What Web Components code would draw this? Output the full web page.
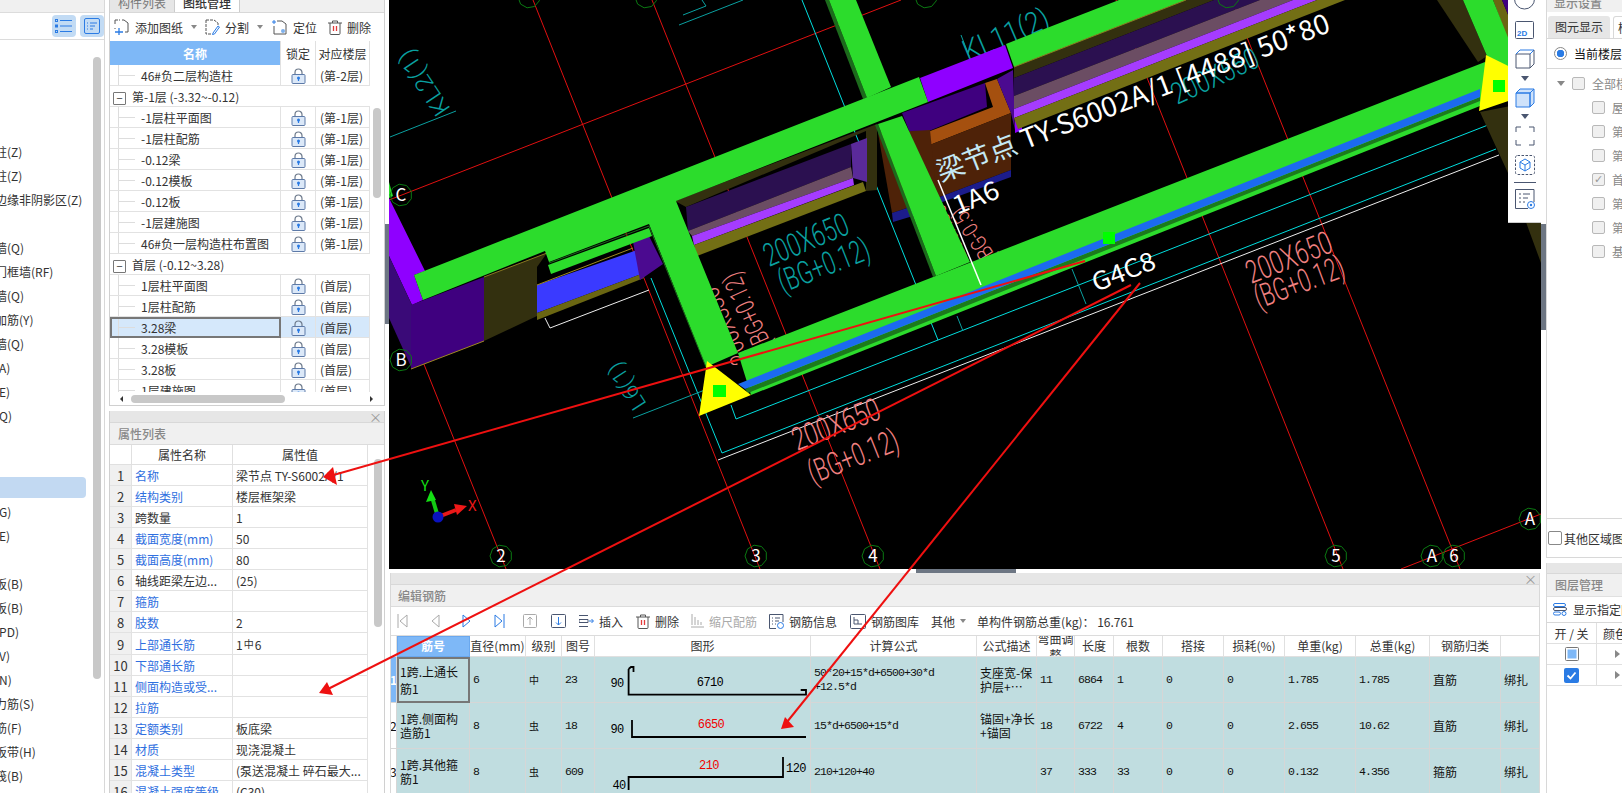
<!DOCTYPE html>
<html lang="zh">
<head>
<meta charset="utf-8">
<title>编辑钢筋</title>
<style>
  html, body { margin: 0; height: 793px; overflow: hidden; background: #fff; }
  body { font: 12px "Noto Sans CJK SC", "Liberation Sans", sans-serif; color: #333; }
</style>
</head>
<body>
<app-shell>
  <nav-panel slot="nav"></nav-panel>
  <drawing-panel slot="drawing"></drawing-panel>
  <prop-panel slot="props"></prop-panel>
  <cad-view slot="cad"><view-toolbar></view-toolbar></cad-view>
  <rebar-panel slot="rebar"></rebar-panel>
  <display-panel slot="display"></display-panel>
  <layer-panel slot="layers"></layer-panel>
  <red-arrows slot="arrows"></red-arrows>
</app-shell>

<script>
const FONT = '"Noto Sans CJK SC", "Liberation Sans", sans-serif';
const MONO = '"Liberation Mono", "Noto Sans CJK SC", monospace';

// small icon set shared by the toolbars
const icons = {
  lock: `<svg width="15" height="16" viewBox="0 0 15 16"><path d="M4 7V4.5a3.5 3.5 0 0 1 7 0V7" fill="none" stroke="#6d7a8c" stroke-width="1.2"/><rect x="1" y="6.5" width="13" height="9" rx="1" fill="#dbe8f8" stroke="#5d7aa8"/><circle cx="7.5" cy="10" r="1.5" fill="#2a7be4"/><path d="M7.5 10v3" stroke="#2a7be4" stroke-width="1.2"/></svg>`,
  add: `<svg width="16" height="16" viewBox="0 0 16 16" fill="none"><path d="M4 1H1v4M8 1h2l4 3v9h-3M1 9v1" stroke="#555"/><path d="M5 1h1" stroke="#555"/><path d="M1 13h8M5 9v7" stroke="#2a7be4" stroke-width="1.3"/></svg>`,
  split: `<svg width="16" height="16" viewBox="0 0 16 16" fill="none"><path d="M2 1h8l4 3v2M2 1v14h5" stroke="#555" stroke-dasharray="3 1"/><path d="M9 14l5-7 1.5 1-5 7-2 .5z" stroke="#2a7be4"/></svg>`,
  locate: `<svg width="16" height="16" viewBox="0 0 16 16" fill="none"><path d="M5 2h5l4 3v10H2V7" stroke="#555"/><path d="M2 1v4M0 3h4" stroke="#2a7be4"/><circle cx="11" cy="12" r="2" fill="#7eb0ec"/></svg>`,
  trash: `<svg width="14" height="15" viewBox="0 0 14 15" fill="none"><path d="M2 3v10.5a1 1 0 0 0 1 1h8a1 1 0 0 0 1-1V3M0 3h14M4.5 3V1h5v2" stroke="#555"/><path d="M5.5 6v5M8.5 6v5" stroke="#e23b3b" stroke-width="1.3"/></svg>`,
  list: `<svg width="18" height="14" viewBox="0 0 18 14" fill="none" stroke="#2a7be4"><rect x=".5" y=".5" width="2" height="2"/><rect x=".5" y="6" width="2" height="2"/><rect x=".5" y="11.500" width="2" height="2"/><path d="M5 1.500h12M5 7h12M5 12.500h12" stroke-width="1.200"/></svg>`,
  form: `<svg width="16" height="16" viewBox="0 0 16 16" fill="none" stroke="#2a7be4"><rect x=".5" y=".5" width="15" height="15" rx="1.500"/><path d="M3 5h1M6 5h7M3 8h1M6 8h5M3 11h1M6 11h3"/></svg>`,
  caret: `<svg width="6" height="4" viewBox="0 0 6 4"><path d="M0 0h6L3 4z" fill="#888"/></svg>`
};

class AppShell extends HTMLElement {
  constructor() {
    super();
    this.attachShadow({ mode: 'open' });
    this.shadowRoot.innerHTML = `
      <style>
        :host { display: block; position: relative; width: 1622px; height: 793px; overflow: hidden; }
        .cols { display: flex; height: 793px; }
        .nav { width: 105px; flex: none; }
        .mid { width: 276px; margin-left: 4px; flex: none; display: flex; flex-direction: column; gap: 5px; }
        .v-split { width: 4px; flex: none; display: flex; align-items: flex-start; background: #fff; }
        .v-split i { display: block; width: 4px; height: 100px; margin-top: 224px; background: #6d7683; }
        .center { width: 1152px; flex: none; display: flex; flex-direction: column; }
        .h-split { height: 4px; flex: none; padding-left: 527px; }
        .h-split i { display: block; width: 100px; height: 4px; background: #6d7683; }
        .right { width: 76px; flex: none; display: flex; flex-direction: column; gap: 5px; }
      </style>
      <div class="cols">
        <div class="nav"><slot name="nav"></slot></div>
        <div class="mid"><slot name="drawing"></slot><slot name="props"></slot></div>
        <div class="v-split"><i></i></div>
        <div class="center">
          <slot name="cad"></slot>
          <div class="h-split"><i></i></div>
          <slot name="rebar"></slot>
        </div>
        <div class="v-split" style="width:5px"><i style="width:5px;height:106px"></i></div>
        <div class="right"><slot name="display"></slot><slot name="layers"></slot></div>
      </div>
      <slot name="arrows"></slot>`;
  }
}

class NavPanel extends HTMLElement {
  constructor() {
    super();
    this.attachShadow({ mode: 'open' });
    const items = ['', '', '', '', '柱(Z)', '柱(Z)', '边缘非阴影区(Z)', '', '墙(Q)', '门框墙(RF)', '墙(Q)', '加筋(Y)', '墙(Q)', '(A)', '(E)', '(Q)', '', '', '*', '(G)', '(E)', '', '板(B)', '板(B)', '(PD)', '(V)', '(N)', '力筋(S)', '筋(F)', '板带(H)', '筏(B)'];
    const rows = items.map(t => t === '*' ? '<div class="row sel"></div>' : `<div class="row"><span>${t}</span></div>`).join('');
    this.shadowRoot.innerHTML = `
      <style>
        :host { display: block; height: 793px; border-right: 1px solid #d8d8d8; box-sizing: border-box; overflow: hidden; }
        .strip { height: 12px; background: #f0f0f0; border-bottom: 1px solid #dcdcdc; }
        .tools { height: 26px; border-bottom: 1px solid #dcdcdc; display: flex; justify-content: flex-end; align-items: center; gap: 4px; padding-right: 0; }
        .tools b { width: 24px; height: 22px; background: #c2dbf4; border-radius: 4px; display: flex; align-items: center; justify-content: center; }
        .body { display: flex; height: 740px; padding-top: 4px; }
        .list { width: 86px; flex: none; overflow: hidden; }
        .row { height: 24px; line-height: 24px; white-space: nowrap; font-size: 12px; }
        .row span { display: block; margin-left: -5px; }
        .row.sel { height: 21px; margin: 1px 0 2px; background: #c2d9f2; border-radius: 0 4px 4px 0; }
        .bar { width: 8px; margin: 13px 0 0 7px; height: 622px; border-radius: 4px; background: #c8c8c8; }
      </style>
      <div class="strip"></div>
      <div class="tools"><b>${icons.list}</b><b>${icons.form}</b></div>
      <div class="body"><div class="list">${rows}</div><div class="bar"></div></div>`;
  }
}

class DrawingPanel extends HTMLElement {
  constructor() {
    super();
    this.attachShadow({ mode: 'open' });
    const groups = [
      ['leaf', '46#负二层构造柱', '(第-2层)'],
      ['group', '第-1层 (-3.32~-0.12)'],
      ['leaf', '-1层柱平面图', '(第-1层)'], ['leaf', '-1层柱配筋', '(第-1层)'], ['leaf', '-0.12梁', '(第-1层)'],
      ['leaf', '-0.12模板', '(第-1层)'], ['leaf', '-0.12板', '(第-1层)'], ['leaf', '-1层建施图', '(第-1层)'],
      ['leaf', '46#负一层构造柱布置图', '(第-1层)'],
      ['group', '首层 (-0.12~3.28)'],
      ['leaf', '1层柱平面图', '(首层)'], ['leaf', '1层柱配筋', '(首层)'], ['sel', '3.28梁', '(首层)'],
      ['leaf', '3.28模板', '(首层)'], ['leaf', '3.28板', '(首层)'], ['leaf', '1层建施图', '(首层)']
    ];
    const rows = groups.map(([kind, name, floor]) => kind === 'group'
      ? `<tr><td colspan="3" class="grp"><i>−</i>${name}</td></tr>`
      : `<tr class="${kind}"><td class="nm">${name}</td><td class="lk">${icons.lock}</td><td>${floor}</td></tr>`).join('');
    this.shadowRoot.innerHTML = `
      <style>
        :host { display: block; height: 406px; border: solid #d0d0d0; border-width: 0 1px 1px; box-sizing: border-box; overflow: hidden; flex: none; }
        .tabs { height: 12px; display: flex; background: #f0f0f0; border-bottom: 1px solid #d8d8d8; }
        .tabs span { width: 64px; height: 12px; overflow: hidden; text-align: center; color: #777; background: #e6e6e6; border-right: 1px solid #ccc; }
        .tabs span.on { background: #fff; color: #333; font-weight: 500; }
        .tabs u { display: block; text-decoration: none; margin-top: -9px; line-height: 24px; }
        .tools { height: 28px; display: flex; align-items: center; font-size: 12px; padding-left: 4px; }
        .tools svg { flex: none; }
        .tools span { margin-left: 5px; }
        .main { display: flex; height: 351px; }
        .wrap { width: 260px; height: 351px; overflow: hidden; flex: none; }
        table { width: 260px; table-layout: fixed; border-collapse: separate; border-spacing: 0; }
        th { height: 24px; padding: 0; font-weight: 400; border-right: 1px solid #e0e0e0; box-sizing: border-box; white-space: nowrap; overflow: hidden; }
        th.blue { background: #7eb8f7; color: #fff; font-weight: 700; }
        td { height: 21px; padding: 1px 0 0 4px; box-sizing: border-box; border-bottom: 1px solid #e2e2e2; border-right: 1px solid #e2e2e2; line-height: 19px; white-space: nowrap; overflow: hidden; }
        td.nm { padding-left: 31px; background: linear-gradient(#ddd,#ddd) 8px 0/1px 100% no-repeat, linear-gradient(#ddd,#ddd) 8px 10px/17px 1px no-repeat; }
        td.lk { padding: 2px 0 0; text-align: center; line-height: 0; }
        td.grp { padding-left: 3px; border-right: 0; }
        td.grp i { display: inline-block; width: 11px; height: 11px; border: 1px solid #777; border-radius: 1px; margin-right: 6px; font-style: normal; text-align: center; line-height: 10px; vertical-align: -1px; font-size: 11px; }
        tr.sel td { background-color: #d5e8fb; }
        tr.sel td.nm { outline: 2px solid #777; outline-offset: -2px; }
        .thumb { width: 8px; height: 90px; margin: 67px 0 0 3px; border-radius: 4px; background: #c8c8c8; }
        .hbar { height: 13px; display: flex; align-items: center; padding-left: 7px; }
        .hbar b { display: block; width: 0; height: 0; border: 3px solid transparent; border-right-color: #333; }
        .hbar em { display: block; width: 154px; height: 8px; margin: 0 0 0 8px; border-radius: 4px; background: #c8c8c8; }
        .hbar b.r { margin-left: 85px; border-right-color: transparent; border-left-color: #333; }
      </style>
      <div class="tabs"><span><u>构件列表</u></span><span class="on"><u>图纸管理</u></span></div>
      <div class="tools">
        ${icons.add}<span>添加图纸</span><span style="margin-left:8px;display:flex">${icons.caret}</span>
        <span style="margin-left:7px;display:flex">${icons.split}</span><span>分割</span><span style="margin-left:8px;display:flex">${icons.caret}</span>
        <span style="margin-left:9px;display:flex">${icons.locate}</span><span>定位</span>
        <span style="margin-left:11px;display:flex">${icons.trash}</span><span>删除</span>
      </div>
      <div class="main">
        <div class="wrap">
          <table>
            <colgroup><col style="width:171px"><col style="width:35px"><col style="width:54px"></colgroup>
            <tr><th class="blue">名称</th><th>锁定</th><th>对应楼层</th></tr>
            ${rows}
          </table>
        </div>
        <div class="thumb"></div>
      </div>
      <div class="hbar"><b></b><em></em><b class="r"></b></div>`;
  }
}

class PropPanel extends HTMLElement {
  constructor() {
    super();
    this.attachShadow({ mode: 'open' });
    const props = [
      ['名称', '梁节点 TY-S6002A/1', 1], ['结构类别', '楼层框架梁', 1], ['跨数量', '1', 0], ['截面宽度(mm)', '50', 1],
      ['截面高度(mm)', '80', 1], ['轴线距梁左边...', '(25)', 0], ['箍筋', '', 1], ['肢数', '2', 1], ['上部通长筋', '1<small>中</small>6', 1],
      ['下部通长筋', '', 1], ['侧面构造或受...', '', 1], ['拉筋', '', 1], ['定额类别', '板底梁', 1], ['材质', '现浇混凝土', 1],
      ['混凝土类型', '(泵送混凝土 碎石最大...', 1], ['混凝土强度等级', '(C30)', 1]
    ];
    const rows = props.map(([n, v, blue], i) => `<tr><td class="n">${i + 1}</td><td class="${blue ? 'blue' : ''}">${n}</td><td>${v}</td></tr>`).join('');
    this.shadowRoot.innerHTML = `
      <style>
        :host { display: block; flex: 1; min-height: 0; border: solid #d0d0d0; border-width: 0 1px; overflow: hidden; }
        .strip { height: 11px; background: #e6e6e6; border-bottom: 1px solid #d8d8d8; display: flex; justify-content: flex-end; color: #999; font-size: 13px; line-height: 11px; padding-right: 2px; }
        .title { height: 22px; background: #f0f0f0; border-bottom: 1px solid #dcdcdc; color: #888; font-weight: 500; line-height: 21px; padding-left: 8px; box-sizing: border-box; }
        .main { display: flex; }
        table { width: 258px; flex: none; table-layout: fixed; border-collapse: separate; border-spacing: 0; }
        th { height: 20px; padding: 0; font-weight: 400; border: solid #e0e0e0; border-width: 0 1px 1px 0; box-sizing: border-box; line-height: 19px; }
        td { height: 21px; padding: 1px 0 0 3px; box-sizing: border-box; border: solid #e2e2e2; border-width: 0 1px 1px 0; line-height: 19px; white-space: nowrap; overflow: hidden; }
        td.n { background: #f0f0f0; padding: 1px 0 0; text-align: center; font-size: 13px; }
        td.blue { color: #2f6fe0; }
        small { font-size: 10px; vertical-align: 2px; margin: 0 1px; }
        .thumb { width: 8px; height: 168px; margin: 14px 0 0 6px; border-radius: 4px; background: #c8c8c8; }
      </style>
      <div class="strip">×</div>
      <div class="title">属性列表</div>
      <div class="main">
        <table>
          <colgroup><col style="width:22px"><col style="width:101px"><col style="width:135px"></colgroup>
          <tr><th></th><th>属性名称</th><th>属性值</th></tr>
          ${rows}
        </table>
        <div class="thumb"></div>
      </div>`;
  }
}

class CadView extends HTMLElement {
  constructor() {
    super();
    this.attachShadow({ mode: 'open' });
    const poly = (c, p) => `<polygon fill="${c}" points="${p}"/>`;
    const line = (c, w, ...p) => `<polyline fill="none" stroke="${c}" stroke-width="${w}" points="${p.join(' ')}"/>`;
    // text placed along a baseline given by its two end points
    const along = (t, x1, y1, x2, y2, size, fill, cls = 'thin') => {
      const a = Math.atan2(y2 - y1, x2 - x1) * 180 / Math.PI;
      const len = Math.hypot(x2 - x1, y2 - y1);
      return `<text class="${cls}" transform="translate(${x1} ${y1}) rotate(${a.toFixed(1)})" textLength="${len.toFixed(0)}" lengthAdjust="spacingAndGlyphs" font-size="${size}" fill="${fill}">${t}</text>`;
    };
    const axis = (t, x, y) => {
      const pts = [];
      for (let i = 0; i < 9; i++) pts.push((x + 11 * Math.cos(i * 0.698 + 0.35)).toFixed(1) + ',' + (y + 11 * Math.sin(i * 0.698 + 0.35)).toFixed(1));
      return `<polygon points="${pts.join(' ')}" fill="none" stroke="#0b7a12"/>` + (t ? `<text x="${x}" y="${y + 6}" text-anchor="middle" font-size="17" fill="#fff">${t}</text>` : '');
    };
    const RED = '#e01010', CY = '#00dede', TEAL = '#0aa0a0', PINK = '#f08080', GR = '#2cdc2c', OL = '#33300f';

    const grid = [
      line(RED, 1, '278,0', '506,569'), line(RED, 1, '533,0', '760,569'), line(RED, 1, '652,0', '880,569'),
      line(RED, 1, '1116,0', '1343,569'), line(RED, 1, '1232,0', '1460,569'),
      line(RED, 1, '389,200', '901,0'), line(RED, 1, '1401,569', '1541,514')
    ].join('');
    const wires = [
      line(CY, 1, '802,0', '938,340'), line(CY, 1, '731,405', '736,419', '1488,125'), line(CY, 1, '651,278', '722,453', '1496,149'),
      line('#eee', 1, '718,460', '1499,155'), line('#eee', 1, '649,290', '550,328', '545,318'),
      line(TEAL, 1, '390,137', '456,111'), line(TEAL, 1, '633,418', '710,388'), line(TEAL, 1, '1072,269', '1086,304'),
      line(TEAL, 1, '957,316', '963,331'), line(TEAL, 1, '679,25', '743,0'), line(TEAL, 1, '683,15', '706,6', '702,0'), line(TEAL, 1, '961,35', '969,56')
    ].join('');
    const labels = [
      along('KL2(1)', 451, 109, 410, 47, 24, TEAL),
      along('L6(1)', 647, 404, 619, 360, 22, TEAL),
      along('KL11(2)', 968, 62, 1052, 26, 30, TEAL),
      along('200X550', 1177, 105, 1261, 66, 30, TEAL),
      along('200X650', 769, 267, 851, 233, 32, TEAL),
      along('(BG+0.12)', 783, 293, 872, 258, 32, TEAL),
      along('200X650', 797, 451, 883, 418, 32, PINK),
      along('(BG+0.12)', 813, 484, 901, 449, 32, PINK),
      along('200X650', 1251, 284, 1335, 251, 32, PINK),
      along('(BG+0.12)', 1259, 309, 1347, 276, 32, PINK),
      along('200X330', 750, 360, 716, 285, 26, PINK),
      along('(BG+0.12)', 772, 345, 738, 270, 26, PINK),
      along('200X550', 967, 257, 940, 195, 22, PINK),
      along('(BG-0.5)', 997, 258, 963, 205, 22, PINK)
    ].join('');
    const solids = [
      // purple column on the left and wall faces
      poly('#8f00ff', '389,198 425,271 414,275 423,300 412,305 389,256'),
      poly('#3a0a78', '389,256 412,305 412,369 389,318'),
      poly('#3f007f', '411,305 484,277 484,341 411,369'),
      poly(OL, '484,277 547,253 537,267 537,316 484,341'),
      poly('#3a3aff', '537,285 640,249 644,273 537,313'),
      poly('#6a6612', '537,313 644,273 644,278 537,320'),
      poly('#4b0a90', '633,242 649,236 663,264 640,280'),
      line('#a08a20', 1, '411,369', '484,341'),
      line('#8a7a20', 1, '484,277', '547,253'),
      line('#a08a20', 1, '537,285', '633,248'),
      // left window between the beams
      poly(OL, '675,201 877,124 877,190 866,191 866,131 686,207'),
      poly('#2b1050', '686,207 851,144 851,167 688,231'),
      poly('#6b4d63', '688,231 851,167 853,178 692,236'),
      poly('#a53cff', '692,236 853,178 854,185 694,245'),
      poly('#5a2a9a', '851,144 867,138 867,182 853,178'),
      poly('#736f15', '694,245 863,182 866,191 697,256'),
      // brown block and purple frame in the middle
      poly('#8f00ff', '920,78 1005,45 1013,68 928,102'),
      poly('#3f007f', '902,113 985,83 987,107 912,138'),
      poly('#a5500f', '912,138 993,107 985,83 997,79 1011,113 917,150'),
      poly('#4e2208', '917,150 1011,113 1011,170 937,198'),
      poly('#1c1c8c', '937,198 1011,170 1011,177 937,204'),
      poly('#4e2208', '878,133 930,130 937,198 907,208 892,213'),
      poly('#1c1c8c', '892,213 910,207 913,216 893,222'),
      poly('#4b0a90', '997,79 1013,70 1015,130 1011,113'),
      poly('#8f00ff', '1015,120 1022,118 1022,130 1015,133'),
      // window on the right, running off the top
      poly(OL, '1014,67 1186,0 1214,0 1014,78'),
      poly('#2b1050', '1014,78 1214,0 1260,0 1014,96'),
      poly('#6b4d63', '1014,96 1260,0 1293,0 1014,109'),
      poly('#a53cff', '1014,109 1293,0 1317,0 1014,118'),
      poly('#736f15', '1014,118 1317,0 1345,0 1018,129'),
      // far right
      poly(OL, '1437,0 1463,0 1487,56 1478,62'),
      poly(OL, '1480,112 1541,100 1541,263 1508,173'),
      poly('#6a6612', '1493,0 1502,0 1541,95 1541,130 1508,40'),
      poly('#3f007f', '1502,0 1541,0 1541,95'),
      poly(GR, '1463,0 1493,0 1541,120 1541,150 1508,75 1487,56'),
      // green beams
      poly('#1c6a1c', '825,0 829,0 867,98 863,99'),
      poly(GR, '829,0 856,0 891,87 867,98'),
      poly(GR, '414,275 919,77 928,102 676,201 738,353 706,367 649,224 549,262 545,251 423,300'),
      poly(GR, '548,265 649,228 652,236 551,274'),
      poly(GR, '1006,44 1119,0 1186,0 1014,67'),
      line('#8a7a20', 1, '1014,67', '1186,0'),
      line('#1c6a1c', 1, '549,263', '649,226', '706,367'),
      poly('#1c6a1c', '875,125 878,124 936,276 933,277'),
      poly(GR, '878,124 902,116 970,262 936,276'),
      poly(GR, '738,353 1485,62 1485,104 751,395'),
      poly('#1c7a1c', '745,389 1480,97 1480,101 748,393'),
      poly('#1c6af0', '738,384 1480,89 1480,97 745,389'),
      line('#fff', 1.5, '938,180', '981,285'),
      // yellow markers
      poly('#ffff00', '707,361 699,416 751,395'),
      poly('#00ff00', '713,385 726,385 726,397 713,397'),
      poly('#ffff00', '1486,55 1479,111 1541,90 1541,82'),
      poly('#00ff00', '1493,80 1505,80 1505,92 1493,92'),
      poly('#00ff00', '1103,232 1115,232 1115,244 1103,244'),
      poly(GR, '389,182 393,196 389,198')
    ].join('');
    const circles = [
      axis('2', 501, 556), axis('3', 756, 556), axis('4', 873, 556), axis('5', 1336, 556),
      axis('A', 1432, 556), axis('6', 1454, 556), axis('A', 1530, 519), axis('C', 401, 195), axis('B', 401, 360),
      axis('', 529, -3), axis('', 646, -3), axis('', 926, -3), axis('', 1228, -3)
    ].join('');

    this.shadowRoot.innerHTML = `
      <style>
        :host { display: block; position: relative; height: 569px; width: 1152px; flex: none; background: #000; overflow: hidden; }
        svg { display: block; }
        text { font-family: "Noto Sans CJK SC", "Liberation Sans", sans-serif; }
        text.thin { font-family: Roboto, "Liberation Sans", sans-serif; font-weight: 300; }
        .tb { position: absolute; top: 0; left: 1119px; }
      </style>
      <svg width="1152" height="569" viewBox="389 0 1152 569">
        ${grid}${wires}${labels}${solids}
        ${along('<tspan fill="#c4e8f4">梁节点</tspan> TY-S6002A/1 [4488] 50*80', 941, 182, 1332, 31, 27, '#fff', 'big')}
        ${along('1A6', 957, 215, 1001, 197, 25, '#fff', 'big')}
        ${along('G4C8', 1096, 292, 1158, 268, 25, '#fff', 'big')}
        ${circles}
        <g>
          <path d="M438 517l-6-20" stroke="#14c814" stroke-width="4"/>
          <polygon points="431,490 426,502 436,500" fill="#14e014"/>
          <path d="M438 517l18-7" stroke="#e81818" stroke-width="4"/>
          <polygon points="467,506 454,504 457,515" fill="#f01818"/>
          <circle cx="438" cy="517" r="5.500" fill="#0a12c0"/>
          <text x="421" y="491" font-size="15" fill="#14e014">Y</text>
          <text x="468" y="511" font-size="15" fill="#f01818">X</text>
        </g>
      </svg>
      <div class="tb"><slot></slot></div>`;
  }
}

class ViewToolbar extends HTMLElement {
  constructor() {
    super();
    this.attachShadow({ mode: 'open' });
    const D = '#4a5670', B = '#2a7be4';
    this.shadowRoot.innerHTML = `
      <style>
        :host { display: flex; flex-direction: column; align-items: center; width: 33px; height: 223px; background: #fff; box-sizing: border-box; border-bottom: 1px solid #ccc; overflow: hidden; }
        svg { display: block; flex: none; }
        .c { width: 0; height: 0; border: 4px solid transparent; border-top: 5px solid ${D}; border-bottom: 0; flex: none; }
        hr { width: 22px; height: 1px; margin: 7px 0 6px; border: 0; background: ${D}; flex: none; }
      </style>
      <svg width="21" height="22" viewBox="0 0 21 22" fill="none" style="margin-top:-12px"><circle cx="10.500" cy="11" r="10" stroke="${D}"/><path d="M1 11c2-7 16-8 19-2" stroke="${B}"/></svg>
      <svg width="19" height="18" viewBox="0 0 19 18" fill="none" style="margin-top:11px"><rect x=".5" y=".5" width="18" height="17" rx="1" stroke="${D}"/><text x="2" y="15" font-size="8" font-weight="700" fill="${B}" font-family="Liberation Sans">2D</text></svg>
      <svg width="20" height="20" viewBox="0 0 20 20" fill="none" style="margin-top:10px"><path d="M1 5v14h14V5z" stroke="${D}"/><path d="M1 5l4-4h14l-4 4" stroke="${B}"/><path d="M19 1v14l-4 4" stroke="${D}"/></svg>
      <div class="c" style="margin-top:7px"></div>
      <svg width="20" height="20" viewBox="0 0 20 20" style="margin-top:7px"><path d="M1 5h14v14H1zM15 5l4-4v14l-4 4zM1 5l4-4h14l-4 4z" fill="#cfe2fa" stroke="${B}"/></svg>
      <div class="c" style="margin-top:6px"></div>
      <svg width="20" height="20" viewBox="0 0 20 20" fill="none" stroke="${D}" style="margin-top:7px"><path d="M1 6V1h5M14 1h5v5M19 14v5h-5M6 19H1v-5"/></svg>
      <svg width="20" height="20" viewBox="0 0 20 20" fill="none" style="margin-top:9px"><rect x=".5" y=".5" width="19" height="19" rx="2" stroke="${D}" stroke-dasharray="2.500 1.500"/><path d="M10 4l5 3v6l-5 3-5-3V7zM5 7l5 3 5-3M10 10v6" stroke="${B}"/></svg>
      <hr>
      <svg width="20" height="20" viewBox="0 0 20 20" fill="none"><path d="M19 13V.5H.5v19H13" stroke="${D}"/><path d="M4 5h2M8 5h7M4 9h2M8 9h5M4 13h2M8 13h2" stroke="${D}"/><circle cx="16" cy="16" r="3.500" stroke="${B}"/><circle cx="16" cy="16" r="1.200" fill="${B}"/></svg>`;
  }
}

class RebarPanel extends HTMLElement {
  constructor() {
    super();
    this.attachShadow({ mode: 'open' });
    const G = '#aaa', B = '#2a7be4', D = '#4a5670';
    const widths = [7, 73, 56, 36, 33, 216, 166, 60, 38, 39, 49, 61, 61, 71, 74, 71, 39];
    const heads = ['', '筋号', '直径(mm)', '级别', '图号', '图形', '计算公式', '公式描述', '弯曲调整', '长度', '根数', '搭接', '损耗(%)', '单重(kg)', '总重(kg)', '钢筋归类', ''];
    const txt = (x, y, t, c = '#000', a = 'middle') => `<text x="${x}" y="${y}" text-anchor="${a}" fill="${c}">${t}</text>`;
    const shape = body => `<svg width="215" height="45" viewBox="0 0 215 45" fill="none">${body}</svg>`;
    const shapes = [
      shape(`<path d="M33.600 12v25.700H211V33h-5.300M33.600 12l2.400-2h2.500v5" stroke="#000" stroke-width="1.800"/>${txt(22, 30, '90')}${txt(115, 29, '6710')}`),
      shape(`<path d="M37 17v17h174" stroke="#000" stroke-width="1.800"/>${txt(22, 30, '90')}${txt(116, 25, '6650', '#f00000')}`),
      shape(`<path d="M33.600 41V28H188V8" stroke="#000" stroke-width="1.800"/>${txt(24, 40, '40')}${txt(114, 20, '210', '#f00000')}${txt(201, 23, '120')}`)
    ];
    const data = [
      ['<span class="c17">1跨.上通长<br>筋1</span>', '6', '中', '23', shapes[0], '50*20+15*d+6500+30*d<br>+12.5*d', '支座宽-保<br>护层+…', '11', '6864', '1', '0', '0', '1.785', '1.785', '直筋', '绑扎'],
      ['1跨.侧面构<br>造筋1', '8', '虫', '18', shapes[1], '15*d+6500+15*d', '锚固+净长<br>+锚固', '18', '6722', '4', '0', '0', '2.655', '10.62', '直筋', '绑扎'],
      ['1跨.其他箍<br>筋1', '8', '虫', '609', shapes[2], '210+120+40', '', '37', '333', '33', '0', '0', '0.132', '4.356', '箍筋', '绑扎']
    ];
    const rows = data.map((cols, r) => `<tr>
      <td class="idx ${r === 0 ? 'on' : ''}">${r + 1}</td>
      ${cols.map((c, i) => {
        const cls = [];
        if (i === 0) cls.push('name');
        if (i === 0 && r === 0) cls.push('cur');
        if (i === 2) cls.push('grade');
        if (i === 4) cls.push('shape');
        if (i === 6 || i === 14 || i === 15) cls.push('cjk');
        return `<td class="${cls.join(' ')}">${c}</td>`;
      }).join('')}
    </tr>`).join('');
    const item = (ml, icon, label, gray) => `<span class="it ${gray ? 'g' : ''}" style="margin-left:${ml}px">${icon}${label ? `<em>${label}</em>` : ''}</span>`;
    const tool = [
      item(6, `<svg width="11" height="14" viewBox="0 0 11 14" fill="none" stroke="${G}"><path d="M1 0v14M10 1L3 7l7 6z"/></svg>`),
      item(23, `<svg width="9" height="14" viewBox="0 0 9 14" fill="none" stroke="${G}"><path d="M8 1L1 7l7 6z"/></svg>`),
      item(22, `<svg width="9" height="14" viewBox="0 0 9 14" fill="none" stroke="${B}"><path d="M1 1l7 6-7 6z"/></svg>`),
      item(23, `<svg width="11" height="14" viewBox="0 0 11 14" fill="none" stroke="${B}"><path d="M10 0v14M1 1l7 6-7 6z"/></svg>`),
      item(18, `<svg width="14" height="14" viewBox="0 0 14 14" fill="none" stroke="${G}"><rect x=".5" y=".5" width="13" height="13" rx="1"/><path d="M7 11V3M4.500 5.500L7 3l2.500 2.500"/></svg>`),
      item(14, `<svg width="15" height="14" viewBox="0 0 15 14" fill="none"><rect x=".5" y=".5" width="14" height="13" rx="1" stroke="${D}"/><path d="M7.500 3v8M5 8.500L7.500 11 10 8.500" stroke="${B}"/></svg>`),
      item(13, `<svg width="15" height="12" viewBox="0 0 15 12" fill="none"><path d="M0 .5h9M0 4.500h9v3H0zM0 11.500h9" stroke="${D}"/><path d="M10 6h4M12.500 4l2 2-2 2" stroke="${B}"/></svg>`, '插入'),
      item(13, icons.trash, '删除'),
      item(12, `<svg width="13" height="14" viewBox="0 0 13 14" fill="none" stroke="${G}"><path d="M1 0v11M4 3v8M7 6v5M10 8v3M0 13h13"/></svg>`, '缩尺配筋', true),
      item(12, `<svg width="15" height="15" viewBox="0 0 15 15" fill="none"><path d="M14 8V.5H.5v14H7" stroke="${D}"/><path d="M3 4h1M6 4h5M3 7h1M6 7h4M3 10h1M6 10h1" stroke="${D}"/><circle cx="11.500" cy="11.500" r="3" stroke="${B}"/></svg>`, '钢筋信息'),
      item(13, `<svg width="16" height="15" viewBox="0 0 16 15" fill="none" stroke="${D}"><rect x=".5" y=".5" width="15" height="14" rx="1"/><path d="M4 3v7h8M4 6h4v4" /></svg>`, '钢筋图库'),
      item(7, '', '其他'),
      item(5, icons.caret),
      item(6, '', '单构件钢筋总重(kg)： 16.761')
    ].join('');

    this.shadowRoot.innerHTML = `
      <style>
        :host { display: block; flex: 1; min-height: 0; margin: 0 1px; overflow: hidden; border: solid #d8d8d8; border-width: 0 1px; box-sizing: content-box; width: 1148px; }
        .strip { height: 11px; background: #e6e6e6; border-bottom: 1px solid #d8d8d8; display: flex; justify-content: flex-end; padding-right: 2px; color: #999; font-size: 13px; line-height: 11px; }
        .title { height: 21px; background: #f0f0f0; color: #888; font-weight: 500; padding-left: 7px; line-height: 22px; border-bottom: 1px solid #dcdcdc; }
        .tools { height: 28px; display: flex; align-items: center; border-bottom: 1px solid #dcdcdc; white-space: nowrap; }
        .it { display: flex; align-items: center; }
        .it em { font-style: normal; margin-left: 5px; }
        .it:not(.g) em { color: #333; }
        .it.g em { color: #aaa; }
        table { width: 1150px; table-layout: fixed; border-collapse: separate; border-spacing: 0; margin-left: -1px; }
        th { height: 21px; padding: 0; font-weight: 400; line-height: 20px; box-sizing: border-box; border: solid #e0e0e0; border-width: 0 1px 1px 0; overflow: hidden; white-space: nowrap; text-align: center; }
        th.blue { background: #7eb8f7; color: #fff; font-weight: 700; outline: 1px solid #6aa8ee; outline-offset: -1px; }
        th div { height: 20px; overflow: hidden; }
        th div u { display: block; text-decoration: none; white-space: normal; line-height: 16px; margin-top: -5px; }
        td { height: 46px; padding: 0 0 0 3px; box-sizing: border-box; background: #c0dde0; border: solid #d6d6d6; border-width: 0 1px 1px 0; font: 11.500px/14px ${MONO}; letter-spacing: -.9px; color: #111; vertical-align: middle; overflow: hidden; white-space: nowrap; }
        td.idx { padding: 0; background: #fff; font: 12px ${FONT}; letter-spacing: 0; text-align: left; }
        td.idx.on { background: #7eb8f7; color: #fff; font-weight: 700; }
        td.name, td.cjk { font-family: ${FONT}; font-size: 12px; letter-spacing: 0; }
        td.grade { font-family: ${FONT}; font-size: 10px; letter-spacing: 0; }
        td.name { line-height: 14px; }
        .c17 { line-height: 17px; display: block; }
        td.cur { outline: 2px solid #777; outline-offset: -2px; }
        td.shape { padding: 0; }
        td.shape svg { display: block; font: 12px ${MONO}; letter-spacing: -.6px; }
      </style>
      <div class="strip">×</div>
      <div class="title">编辑钢筋</div>
      <div class="tools">${tool}</div>
      <table>
        <colgroup>${widths.map(w => `<col style="width:${w}px">`).join('')}</colgroup>
        <tr>${heads.map((h, i) => `<th class="${i === 1 ? 'blue' : ''}">${i === 8 ? `<div><u>${h}</u></div>` : h}</th>`).join('')}</tr>
        ${rows}
      </table>`;
  }
}

class DisplayPanel extends HTMLElement {
  constructor() {
    super();
    this.attachShadow({ mode: 'open' });
    const floors = [['屋', 0], ['第', 0], ['第', 0], ['首', 1], ['第', 0], ['第', 0], ['基', 0]];
    this.shadowRoot.innerHTML = `
      <style>
        :host { display: block; height: 558px; flex: none; overflow: hidden; border-bottom: 1px solid #d8d8d8; box-sizing: border-box; white-space: nowrap; border-left: 1px solid #d8d8d8; }
        .strip { height: 12px; background: #f0f0f0; overflow: hidden; color: #888; font-weight: 500; padding-left: 7px; }
        .strip u { display: block; text-decoration: none; margin-top: -9px; line-height: 24px; }
        .tabs { display: flex; gap: 3px; height: 22px; margin-top: 4px; padding-left: 1px; border-bottom: 1px solid #d8d8d8; box-sizing: content-box; }
        .tabs span { width: 62px; height: 22px; line-height: 22px; background: #e6e6e6; text-align: center; border-radius: 3px 3px 0 0; flex: none; }
        .tabs span.on { width: 40px; background: #fff; border: 1px solid #d8d8d8; border-bottom: 0; box-sizing: border-box; text-align: left; padding-left: 4px; }
        .radio { height: 29px; display: flex; align-items: center; padding-left: 7px; border-bottom: 1px solid #d8d8d8; color: #111; }
        .radio i { width: 13px; height: 13px; border-radius: 50%; border: 1px solid #888; box-sizing: border-box; flex: none; margin-right: 7px; background: radial-gradient(circle, #2a7be4 3.500px, #fff 4px); }
        .tree { height: 449px; padding-top: 2px; box-sizing: border-box; color: #888; }
        .r { height: 24px; display: flex; align-items: center; padding-left: 45px; }
        .r b { width: 13px; height: 13px; flex: none; border: 1px solid #b8b8b8; border-radius: 2px; background: #f0f0f0; box-sizing: border-box; margin-right: 7px; font: 11px/11px "DejaVu Sans", sans-serif; color: #999; text-align: center; }
        .r.top { padding-left: 10px; }
        .r.top i { width: 0; height: 0; border: 4px solid transparent; border-top: 5px solid #888; border-bottom: 0; margin-right: 7px; flex: none; }
        .other { height: 39px; display: flex; align-items: center; padding-left: 1px; border-top: 1px solid #d8d8d8; box-sizing: border-box; color: #333; }
        .other b { width: 14px; height: 14px; flex: none; border: 1px solid #888; border-radius: 2px; margin-right: 2px; box-sizing: border-box; }
      </style>
      <div class="strip"><u>显示设置</u></div>
      <div class="tabs"><span>图元显示</span><span class="on">楼层</span></div>
      <div class="radio"><i></i>当前楼层</div>
      <div class="tree">
        <div class="r top"><i></i><b></b>全部楼</div>
        ${floors.map(([t, c]) => `<div class="r"><b>${c ? '✓' : ''}</b>${t}</div>`).join('')}
      </div>
      <div class="other"><b></b>其他区域图</div>`;
  }
}

class LayerPanel extends HTMLElement {
  constructor() {
    super();
    this.attachShadow({ mode: 'open' });
    this.shadowRoot.innerHTML = `
      <style>
        :host { display: block; flex: 1; min-height: 0; overflow: hidden; white-space: nowrap; border-left: 1px solid #d8d8d8; }
        .strip { height: 10px; background: #e6e6e6; border-bottom: 1px solid #d8d8d8; }
        .title { height: 22px; background: #f0f0f0; color: #888; font-weight: 500; padding-left: 8px; line-height: 22px; }
        .show { height: 27px; display: flex; align-items: center; gap: 6px; padding-left: 6px; border-bottom: 1px solid #d8d8d8; border-top: 1px solid #e0e0e0; box-sizing: border-box; }
        .grid { display: grid; grid-template-columns: 50px 26px; grid-auto-rows: 21px; }
        .grid > div { border-bottom: 1px solid #e0e0e0; border-right: 1px solid #e0e0e0; box-sizing: border-box; display: flex; align-items: center; justify-content: center; overflow: hidden; }
        .grid > div.l { justify-content: flex-start; padding-left: 6px; }
        .tri { width: 0; height: 0; border: 4px solid transparent; border-left: 5px solid #888; border-right: 0; margin-left: 12px; }
      </style>
      <div class="strip"></div>
      <div class="title">图层管理</div>
      <div class="show">
        <svg width="14" height="13" viewBox="0 0 14 13" fill="none" stroke="#2a7be4" style="flex:none"><rect x=".5" y=".5" width="12" height="3" rx="1.500"/><rect x=".5" y="4.500" width="13" height="3" rx="1.500" stroke="#4a5670"/><rect x=".5" y="9" width="7" height="3" rx="1.500"/><circle cx="11" cy="10.500" r="2"/></svg>
        <span>显示指定图</span>
      </div>
      <div class="grid">
        <div>开 / 关</div><div class="l">颜色</div>
        <div><svg width="14" height="14" viewBox="0 0 14 14"><rect x=".5" y=".5" width="13" height="13" rx="1" fill="#fff" stroke="#777"/><rect x="2.500" y="2.500" width="9" height="9" fill="#7eb8f7"/></svg></div><div class="l"><i class="tri"></i></div>
        <div><svg width="15" height="15" viewBox="0 0 15 15"><rect width="15" height="15" rx="2" fill="#2a7be4"/><path d="M3.500 7.500l3 3 5-6" fill="none" stroke="#fff" stroke-width="1.800"/></svg></div><div class="l"><i class="tri"></i></div>
      </div>`;
  }
}

// red annotation arrows drawn over the whole window
class RedArrows extends HTMLElement {
  constructor() {
    super();
    this.attachShadow({ mode: 'open' });
    this.shadowRoot.innerHTML = `
      <style>
        :host { position: absolute; left: 0; top: 0; width: 1622px; height: 793px; pointer-events: none; }
        svg { display: block; }
      </style>
      <svg width="1622" height="793" viewBox="0 0 1622 793">
        <g stroke="#ee1010" stroke-width="2" fill="none">
          <path d="M1085 261L330 476"/>
          <path d="M1131 285L328 689"/>
          <path d="M1140 283L787 722"/>
        </g>
        <g fill="#ee1010">
          <polygon points="323,477 333,467 337,485"/>
          <polygon points="319,693 327,682 333,695"/>
          <polygon points="781,729 785,717 794,727"/>
        </g>
      </svg>`;
  }
}

customElements.define('app-shell', AppShell);
customElements.define('nav-panel', NavPanel);
customElements.define('drawing-panel', DrawingPanel);
customElements.define('prop-panel', PropPanel);
customElements.define('cad-view', CadView);
customElements.define('view-toolbar', ViewToolbar);
customElements.define('rebar-panel', RebarPanel);
customElements.define('display-panel', DisplayPanel);
customElements.define('layer-panel', LayerPanel);
customElements.define('red-arrows', RedArrows);
</script>
</body>
</html>
